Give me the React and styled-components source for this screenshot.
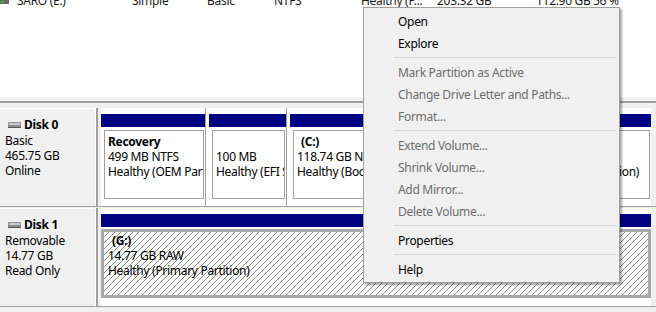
import React from "react";
import styled, { createGlobalStyle } from "styled-components";

const GlobalStyle = createGlobalStyle`
  html, body {
    margin: 0;
    padding: 0;
    background: #fff;
    overflow: hidden;
  }
  body {
    font-family: "Noto Sans", "Segoe UI", sans-serif;
    font-size: 12px;
    letter-spacing: -0.3px;
    color: #000;
  }
`;

const Screen = styled.div`
  position: relative;
  width: 656px;
  height: 312px;
  overflow: hidden;
  background: #f0f0f0;
`;

const ListPane = styled.div`
  height: 97px;
  background: #fff;
  overflow: hidden;
`;

const VolumeRow = styled.div`
  display: grid;
  grid-template-columns: 132px 75px 67px 87px 76px 99px 57px 1fr;
  margin-top: -7px;
  line-height: 15px;
  white-space: nowrap;
  color: #1a1a1a;
`;

const NameCell = styled.div`
  display: flex;
  align-items: center;
  gap: 8px;
`;

const Splitter = styled.div`
  height: 4px;
  background: #f0f0f0;
  border-bottom: 2px solid #9f9f9f;
`;

const GraphPane = styled.div`
  padding-top: 5px;
`;

const DiskRow = styled.div`
  display: flex;
  height: 98px;
  border-bottom: 1px solid #a0a0a0;
  margin-bottom: 1px;
`;

const DiskLabel = styled.div`
  width: 96px;
  margin-right: 5px;
  padding: 8px 0 0 5px;
  box-sizing: border-box;
  background: #f0f0f0;
  border-top: 1px solid #fff;
  border-right: 1px solid #fff;
  box-shadow: 1px 0 0 #a0a0a0, 2px 0 0 #a0a0a0;
  line-height: 15px;
`;

const DiskTitle = styled.div`
  display: flex;
  align-items: center;
  gap: 3px;
  padding-left: 3px;
  font-weight: 700;
  line-height: 16px;
`;

const Partitions = styled.div`
  flex: 1;
  display: flex;
  gap: 3px;
  margin-right: 5px;
  background: #fff;
`;

const Column = styled.div`
  display: flex;
  flex-direction: column;
  width: ${(p) => (p.$width ? `${p.$width}px` : "auto")};
  flex: ${(p) => (p.$width ? "none" : 1)};
  min-width: 0;
  border-right: ${(p) => (p.$last ? "none" : "1px solid #a0a0a0")};
  background: #fff;
`;

const Stripe = styled.div`
  height: 13px;
  margin-top: 6px;
  background: #000080;
`;

const VolumeBox = styled.div`
  margin: ${(p) => (p.$selected ? "2px 0 0 0" : "3px 1px 0 3px")};
  height: 69px;
  box-sizing: border-box;
  border: ${(p) => (p.$selected ? "3px solid #a9a9a9" : "1px solid #a0a0a0")};
  padding: ${(p) => (p.$selected ? "1px 0 0 4px" : "3px 0 0 3px")};
  line-height: 15px;
  white-space: nowrap;
  overflow: hidden;
  background: ${(p) =>
    p.$selected
      ? "repeating-linear-gradient(135deg, #fff 0 3.2px, #8c8c8c 3.2px 4.24px)"
      : "#fff"};
`;

const VolumeName = styled.div`
  font-weight: 700;
  padding-left: ${(p) => (p.$indent ? "4px" : "0")};
`;

const Menu = styled.div`
  position: absolute;
  left: 363px;
  top: 7px;
  width: 257px;
  box-sizing: border-box;
  padding: 2px;
  background: #f0f0f0;
  border: 1px solid #a0a0a0;
  box-shadow: 2px 2px 2px rgba(0, 0, 0, 0.35);
`;

const MenuItem = styled.div`
  height: 22px;
  line-height: 23px;
  padding-left: 32px;
  color: ${(p) => (p.$disabled ? "#6d6d6d" : "#000")};
  white-space: nowrap;
`;

const MenuSeparator = styled.div`
  height: 7px;
  display: flex;
  align-items: center;
  margin: 0 1px 0 28px;
  &::after {
    content: "";
    flex: 1;
    height: 1px;
    background: #d5d5d5;
  }
`;

const DriveIcon = () => (
  <svg width="9" height="6" viewBox="0 0 9 6">
    <rect x="0" y="0" width="9" height="6" fill="#6b6b6b" />
    <rect x="1" y="3" width="3" height="2" fill="#3fae3f" />
  </svg>
);

const DiskIcon = () => (
  <svg width="13" height="6" viewBox="0 0 13 6">
    <rect x="0" y="0" width="13" height="6" rx="1" fill="#8f8f8f" />
    <rect x="1" y="1" width="11" height="2" fill="#c9c9c9" />
    <rect x="0" y="5" width="13" height="1" fill="#555" />
    <rect x="1" y="3" width="2" height="1" fill="#4caf50" />
  </svg>
);

const menu = [
  { label: "Open" },
  { label: "Explore" },
  "sep",
  { label: "Mark Partition as Active", disabled: true },
  { label: "Change Drive Letter and Paths...", disabled: true },
  { label: "Format...", disabled: true },
  "sep",
  { label: "Extend Volume...", disabled: true },
  { label: "Shrink Volume...", disabled: true },
  { label: "Add Mirror...", disabled: true },
  { label: "Delete Volume...", disabled: true },
  "sep",
  { label: "Properties" },
  "sep",
  { label: "Help" },
];

const disks = [
  {
    name: "Disk 0",
    info: ["Basic", "465.75 GB", "Online"],
    volumes: [
      { width: 104, name: "Recovery", lines: ["499 MB NTFS", "Healthy (OEM Partition)"] },
      { width: 77, name: "", lines: ["100 MB", "Healthy (EFI System Partition)"] },
      {
        width: 183,
        name: "(C:)",
        indent: true,
        lines: ["118.74 GB NTFS", "Healthy (Boot, Page File, Crash Dump, Basic Data Partition)"],
      },
      {
        name: "SARO (E:)",
        lines: ["203.32 GB NTFS", "Healthy (Basic Data Partition)"],
      },
    ],
  },
  {
    name: "Disk 1",
    info: ["Removable", "14.77 GB", "Read Only"],
    volumes: [
      {
        name: "(G:)",
        indent: true,
        selected: true,
        lines: ["14.77 GB RAW", "Healthy (Primary Partition)"],
      },
    ],
  },
];

export default function App() {
  return (
    <Screen>
      <GlobalStyle />
      <ListPane>
        <VolumeRow>
          <NameCell>
            <DriveIcon />
            <span>SARO (E:)</span>
          </NameCell>
          <span>Simple</span>
          <span>Basic</span>
          <span>NTFS</span>
          <span>Healthy (P...</span>
          <span>203.32 GB</span>
          <span>112.90 GB</span>
          <span>56 %</span>
        </VolumeRow>
      </ListPane>
      <Splitter />
      <GraphPane>
        {disks.map((disk) => (
          <DiskRow key={disk.name}>
            <DiskLabel>
              <DiskTitle>
                <DiskIcon />
                {disk.name}
              </DiskTitle>
              {disk.info.map((line) => (
                <div key={line}>{line}</div>
              ))}
            </DiskLabel>
            <Partitions>
              {disk.volumes.map((v, i) => (
                <Column key={i} $width={v.width} $last={i === disk.volumes.length - 1}>
                  <Stripe />
                  <VolumeBox $selected={v.selected}>
                    {v.name ? <VolumeName $indent={v.indent}>{v.name}</VolumeName> : <div>&nbsp;</div>}
                    {v.lines.map((l) => (
                      <div key={l}>{l}</div>
                    ))}
                  </VolumeBox>
                </Column>
              ))}
            </Partitions>
          </DiskRow>
        ))}
      </GraphPane>
      <Menu>
        {menu.map((m, i) =>
          m === "sep" ? (
            <MenuSeparator key={i} />
          ) : (
            <MenuItem key={i} $disabled={m.disabled}>
              {m.label}
            </MenuItem>
          )
        )}
      </Menu>
    </Screen>
  );
}
